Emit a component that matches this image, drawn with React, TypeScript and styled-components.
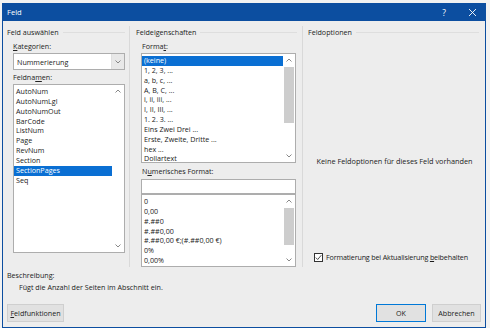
import React from "react";
import styled, { createGlobalStyle } from "styled-components";

const GlobalStyle = createGlobalStyle`
  html, body {
    margin: 0;
    padding: 0;
    background: #f2f2f2;
    font-family: "Open Sans", "Noto Sans", sans-serif;
    font-size: 7.15px;
    color: #1a1a1a;
  }
`;

const fieldNames = [
  "AutoNum",
  "AutoNumLgl",
  "AutoNumOut",
  "BarCode",
  "ListNum",
  "Page",
  "RevNum",
  "Section",
  "SectionPages",
  "Seq",
];

const formats = [
  "(keine)",
  "1, 2, 3, ...",
  "a, b, c, ...",
  "A, B, C, ...",
  "i, ii, iii, ...",
  "I, II, III, ...",
  "1. 2. 3. ...",
  "Eins Zwei Drei ...",
  "Erste, Zweite, Dritte ...",
  "hex ...",
  "Dollartext",
];

const numberFormats = [
  "0",
  "0,00",
  "#.##0",
  "#.##0,00",
  "#.##0,00 €;(#.##0,00 €)",
  "0%",
  "0,00%",
];

const Screen = styled.div`
  width: 490px;
  height: 328px;
  padding: 3px 0 0 2px;
  box-sizing: border-box;
  overflow: hidden;
`;

const Dialog = styled.div`
  width: 484px;
  height: 325px;
  box-sizing: border-box;
  background: #ededed;
  border: 1px solid #0c4ea0;
  border-top: none;
  display: flex;
  flex-direction: column;
`;

const TitleBar = styled.div`
  height: 18px;
  background: #0c4ea0;
  color: #ffffff;
  display: flex;
  align-items: center;
  padding-left: 5px;
  margin: 0 -1px;
`;

const Title = styled.div`
  flex: 1;
  font-size: 7.6px;
`;

const TitleButton = styled.div`
  width: 28px;
  height: 18px;
  display: flex;
  align-items: center;
  justify-content: center;
  font-size: 8.5px;
`;

const Columns = styled.div`
  display: grid;
  grid-template-columns: 127px 173px 1fr;
  height: 246px;
`;

const Column = styled.div<{ $sep?: boolean; $pad: number }>`
  display: flex;
  flex-direction: column;
  padding-left: ${(p) => p.$pad}px;
  padding-top: 1px;
  margin-top: 5px;
  border-right: ${(p) => (p.$sep ? "1px solid #d9d9d9" : "none")};
`;

const GroupHeader = styled.div<{ $gap: number }>`
  display: flex;
  align-items: center;
  height: 10px;
  line-height: 10px;
  margin-right: ${(p) => p.$gap}px;
  color: #222;
  &::after {
    content: "";
    flex: 1;
    margin-left: 4px;
    border-top: 1px solid #dedede;
  }
`;

const Label = styled.div<{ $indent: number; $top: number }>`
  height: 10px;
  line-height: 10px;
  margin-left: ${(p) => p.$indent}px;
  margin-top: ${(p) => p.$top}px;
  color: #222;
  u {
    text-decoration-thickness: 1px;
    text-underline-offset: 1px;
  }
`;

const Combo = styled.div`
  margin: 2px 0 0 6px;
  width: 112px;
  height: 17px;
  box-sizing: border-box;
  border: 1px solid #adadad;
  background: #ffffff;
  display: flex;
  align-items: center;
`;

const ComboText = styled.div`
  flex: 1;
  padding-left: 3px;
`;

const ComboButton = styled.div`
  width: 12px;
  height: 15px;
  background: #e8e8e8;
  border-left: 1px solid #e0e0e0;
  display: flex;
  align-items: center;
  justify-content: center;
`;

const ListBox = styled.div<{ $w: number; $h: number; $indent: number; $top: number }>`
  margin: ${(p) => p.$top}px 0 0 ${(p) => p.$indent}px;
  width: ${(p) => p.$w}px;
  height: ${(p) => p.$h}px;
  box-sizing: border-box;
  border: 1px solid #adadad;
  background: #ffffff;
  display: flex;
  overflow: hidden;
`;

const Items = styled.div`
  flex: 1;
  padding-top: 2px;
`;

const Item = styled.div<{ $selected?: boolean }>`
  height: 9.85px;
  line-height: 9.85px;
  padding-left: 2px;
  white-space: nowrap;
  background: ${(p) => (p.$selected ? "#0a6fd3" : "transparent")};
  color: ${(p) => (p.$selected ? "#ffffff" : "#1a1a1a")};
`;

const ScrollBar = styled.div`
  width: 12px;
  display: flex;
  flex-direction: column;
  align-items: center;
  background: #ffffff;
`;

const Arrow = styled.div`
  height: 12px;
  display: flex;
  align-items: center;
  justify-content: center;
`;

const Track = styled.div`
  flex: 1;
  width: 100%;
  display: flex;
  flex-direction: column;
`;

const Thumb = styled.div<{ $top: number; $h: number }>`
  margin: ${(p) => p.$top}px 1px 0 1px;
  height: ${(p) => p.$h}px;
  background: #cdcdcd;
`;

const TextInput = styled.div`
  margin: 3px 0 0 5px;
  width: 155px;
  height: 15px;
  box-sizing: border-box;
  border: 1px solid #adadad;
  background: #ffffff;
`;

const Message = styled.div`
  flex: 1;
  display: flex;
  align-items: center;
  justify-content: center;
  padding-top: 32px;
  padding-right: 4px;
  color: #222;
  font-size: 7.3px;
`;

const CheckRow = styled.div`
  display: flex;
  align-items: center;
  gap: 3px;
  margin: 0 0 5px 6px;
  height: 10px;
  letter-spacing: -0.15px;
`;

const CheckBox = styled.div`
  width: 9px;
  height: 9px;
  box-sizing: border-box;
  border: 1px solid #333;
  background: #ffffff;
  display: flex;
  align-items: center;
  justify-content: center;
`;

const Description = styled.div`
  padding: 3px 0 0 4px;
  line-height: 10px;
  color: #222;
`;

const DescText = styled.div`
  margin: 2px 0 0 12px;
`;

const ButtonRow = styled.div`
  display: flex;
  align-items: center;
  padding: 12px 4px 0 4px;
  gap: 6px;
`;

const Button = styled.div<{ $w: number; $default?: boolean }>`
  width: ${(p) => p.$w}px;
  height: 18px;
  box-sizing: border-box;
  background: #e1e1e1;
  border: 1px solid ${(p) => (p.$default ? "#0078d7" : "#cfcfcf")};
  display: flex;
  align-items: center;
  justify-content: center;
  color: #222;
`;

const Spacer = styled.div`
  flex: 1;
`;

const Chevron = ({ up }: { up?: boolean }) => (
  <svg width="6" height="4" viewBox="0 0 6 4">
    <path
      d={up ? "M0.5 3.5 L3 1 L5.5 3.5" : "M0.5 0.5 L3 3 L5.5 0.5"}
      fill="none"
      stroke="#7a7a7a"
      strokeWidth="0.9"
    />
  </svg>
);

const ListScroll = ({ thumbTop, thumbH }: { thumbTop?: number; thumbH?: number }) => (
  <ScrollBar>
    <Arrow>
      <Chevron up />
    </Arrow>
    <Track>{thumbH ? <Thumb $top={thumbTop || 0} $h={thumbH} /> : null}</Track>
    <Arrow>
      <Chevron />
    </Arrow>
  </ScrollBar>
);

const App = () => {
  return (
    <>
      <GlobalStyle />
      <Screen>
        <Dialog>
          <TitleBar>
            <Title>Feld</Title>
            <TitleButton>?</TitleButton>
            <TitleButton>
              <svg width="9" height="9" viewBox="0 0 9 9">
                <path d="M1 1 L8 8 M8 1 L1 8" stroke="#fff" strokeWidth="0.9" />
              </svg>
            </TitleButton>
          </TitleBar>

          <Columns>
            <Column $sep $pad={4}>
              <GroupHeader $gap={4}>Feld auswählen</GroupHeader>
              <Label $indent={6} $top={4}>
                <u>K</u>ategorien:
              </Label>
              <Combo>
                <ComboText>Nummerierung</ComboText>
                <ComboButton>
                  <Chevron />
                </ComboButton>
              </Combo>
              <Label $indent={6} $top={2}>
                Feldna<u>m</u>en:
              </Label>
              <ListBox $w={112} $h={169} $indent={6} $top={2}>
                <Items>
                  {fieldNames.map((n) => (
                    <Item key={n} $selected={n === "SectionPages"}>
                      {n}
                    </Item>
                  ))}
                </Items>
                <ListScroll />
              </ListBox>
            </Column>

            <Column $sep $pad={6}>
              <GroupHeader $gap={5}>Feldeigenschaften</GroupHeader>
              <Label $indent={6} $top={4}>
                Forma<u>t</u>:
              </Label>
              <ListBox $w={155} $h={110} $indent={5} $top={2}>
                <Items>
                  {formats.map((f) => (
                    <Item key={f} $selected={f === "(keine)"}>
                      {f}
                    </Item>
                  ))}
                </Items>
                <ListScroll thumbTop={1} thumbH={56} />
              </ListBox>
              <Label $indent={6} $top={3}>
                N<u>u</u>merisches Format:
              </Label>
              <TextInput />
              <ListBox $w={155} $h={73} $indent={5} $top={0}>
                <Items>
                  {numberFormats.map((f) => (
                    <Item key={f}>{f}</Item>
                  ))}
                </Items>
                <ListScroll thumbTop={1} thumbH={37} />
              </ListBox>
            </Column>

            <Column $pad={5}>
              <GroupHeader $gap={6}>Feldoptionen</GroupHeader>
              <Message>Keine Feldoptionen für dieses Feld vorhanden</Message>
              <CheckRow>
                <CheckBox>
                  <svg width="7" height="7" viewBox="0 0 7 7">
                    <path d="M0.8 3.6 L2.7 5.5 L6.3 1.2" fill="none" stroke="#222" strokeWidth="0.8" />
                  </svg>
                </CheckBox>
                <span>
                  Formatierung bei Aktualisierung <u>b</u>eibehalten
                </span>
              </CheckRow>
            </Column>
          </Columns>

          <Description>
            Beschreibung:
            <DescText>Fügt die Anzahl der Seiten im Abschnitt ein.</DescText>
          </Description>

          <ButtonRow>
            <Button $w={57}>
              <span>
                <u>F</u>eldfunktionen
              </span>
            </Button>
            <Spacer />
            <Button $w={50} $default>
              OK
            </Button>
            <Button $w={49}>Abbrechen</Button>
          </ButtonRow>
        </Dialog>
      </Screen>
    </>
  );
};

export default App;
